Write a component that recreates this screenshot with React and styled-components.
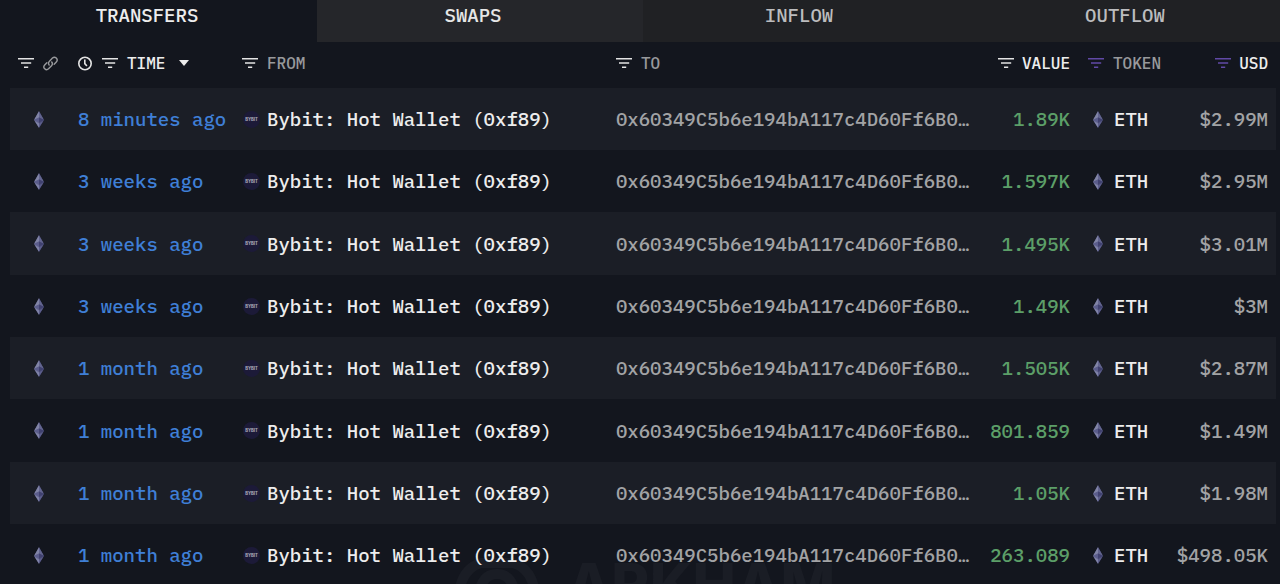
import React from "react";
import styled, { createGlobalStyle, css } from "styled-components";

const GlobalStyle = createGlobalStyle`
  *, *::before, *::after { box-sizing: border-box; }
  body {
    margin: 0;
    background: #13161e;
    font-family: "IBM Plex Mono", "Liberation Mono", monospace;
    font-weight: 500;
    -webkit-font-smoothing: antialiased;
  }
`;

const Panel = styled.main`
  position: relative;
  isolation: isolate;
  height: 100vh;
  overflow: hidden;
  background: #13161e;
  color: #ededed;
`;

const Tabs = styled.nav`
  display: flex;
  margin: 0 -15px 0 -9px;
`;

const Tab = styled.button`
  flex: 1;
  padding: 0 14px 12px 0;
  border: 0;
  background: #202124;
  color: #bcbcbe;
  font: inherit;
  font-size: 19px;
  line-height: 30px;
  cursor: pointer;
  ${(p) => p.$state === "active" && css`background: #13161e; color: #ededed;`}
  ${(p) => p.$state === "hover" && css`background: #25262a; color: #e6e6e6;`}
`;

const TableArea = styled.div`
  padding: 0 4px 0 10px;
`;

const Table = styled.table`
  width: 100%;
  table-layout: fixed;
  border-collapse: collapse;
`;

const Col = styled.col`
  width: ${(p) => p.$width};
`;

const HeadCell = styled.th`
  height: 46px;
  padding: 0 ${(p) => p.$right || 0}px 4px ${(p) => p.$left || 0}px;
  font-weight: inherit;
  font-size: 16px;
  line-height: 20px;
  color: ${(p) => (p.$bright ? "#ededed" : "#98999c")};
`;

const HeadGroup = styled.div`
  display: flex;
  align-items: center;
  justify-content: ${(p) => (p.$end ? "flex-end" : "flex-start")};
  gap: ${(p) => (p.$end ? 8 : 9)}px;
`;

const IconButton = styled.button`
  display: flex;
  padding: 0;
  border: 0;
  background: none;
  color: ${(p) => p.$color || "#e4e4e4"};
  cursor: pointer;
`;

const SortButton = styled.button`
  display: flex;
  align-items: center;
  gap: 14px;
  padding: 0;
  border: 0;
  background: none;
  color: inherit;
  font: inherit;
  cursor: pointer;
`;

const Row = styled.tr`
  height: 62px;
  &:nth-child(odd) { background: #1b1e26; }
  &:nth-child(3n) { height: 63px; }
`;

const Cell = styled.td`
  padding: 0 ${(p) => p.$right || 0}px 0 ${(p) => p.$left || 0}px;
  font-size: 19px;
  line-height: 24px;
  white-space: nowrap;
  text-align: ${(p) => p.$align || "left"};
  color: ${(p) => p.$color || "#ededed"};
`;

const CellLink = styled.a`
  color: inherit;
  text-decoration: none;
`;

const Entity = styled.span`
  display: flex;
  align-items: center;
  gap: ${(p) => p.$gap}px;
`;

const ChainMark = styled.span`
  display: flex;
  justify-content: center;
  padding-right: 10px;
`;

const Watermark = styled.div`
  position: absolute;
  z-index: -1;
  left: 0;
  right: 0;
  bottom: -38px;
  display: flex;
  align-items: center;
  justify-content: center;
  gap: 26px;
  padding-left: 8px;
  color: #1a1d25;
  font: 800 58px/76px Inter, sans-serif;
`;

const FilterIcon = () => (
  <svg width="16" height="12" viewBox="0 0 16 12" fill="none" stroke="currentColor" strokeWidth="1.6" aria-hidden="true">
    <path d="M0 1.8H16M3 6H13.2M6 10.2H10.2" />
  </svg>
);

const LinkIcon = () => (
  <svg width="15" height="15" viewBox="0 0 16 16" fill="none" stroke="#98999c" strokeWidth="1.5" strokeLinecap="round" aria-hidden="true">
    <path d="M6.6 9.6A3 3 0 0 1 6.9 5.6L10.1 2.2A2.9 2.9 0 0 1 14.2 6.3L11.9 8.7" />
    <path d="M9.3 6.4A3 3 0 0 1 9.1 10.3L5.9 13.7A2.9 2.9 0 0 1 1.8 9.6L4.1 7.2" />
  </svg>
);

const ClockIcon = () => (
  <svg width="15" height="15" viewBox="0 0 15 15" fill="none" stroke="currentColor" strokeWidth="1.6" aria-hidden="true">
    <circle cx="7" cy="7.5" r="6.2" />
    <path d="M6.8 3.6V7.6L8.9 10" />
  </svg>
);

const Caret = () => (
  <svg width="10" height="6" viewBox="0 0 10 6" fill="currentColor" aria-hidden="true">
    <path d="M0 0H10L5 6Z" />
  </svg>
);

const EthIcon = () => (
  <svg width="10" height="17" viewBox="0 0 10 17" aria-hidden="true">
    <path d="M5 0L0 9L5 17Z" fill="#65678f" />
    <path d="M5 0L10 9L5 17Z" fill="#4b4d78" />
    <path d="M5 0.5L0.3 8.6L5 6.4Z" fill="#8184a6" />
    <path d="M5 0.5L9.7 8.6L5 6.4Z" fill="#63658f" />
    <path d="M0.3 9L5 6.4V11.6Z" fill="#5a5c8c" />
    <path d="M9.7 9L5 6.4V11.6Z" fill="#40416f" />
    <path d="M0.8 10L5 12.6V16.6Z" fill="#8083a8" />
    <path d="M9.2 10L5 12.6V16.6Z" fill="#5d5f8c" />
  </svg>
);

const BybitIcon = () => (
  <svg width="19" height="19" viewBox="0 0 19 19" aria-hidden="true">
    <circle cx="9.5" cy="9.5" r="8.5" fill="#1c1a38" />
    <text x="9.5" y="11" textAnchor="middle" fill="#a5a5b5" fontFamily="Inter, sans-serif" fontWeight="800" fontSize="4.2">
      BYBIT
    </text>
  </svg>
);

const ArkhamIcon = () => (
  <svg width="88" height="76" viewBox="0 0 88 76" fill="none" stroke="currentColor" strokeWidth="10" aria-hidden="true">
    <path d="M6 70V46Q10 22 28 17H60Q78 22 82 46V70" />
    <path d="M25 72V52Q28 28 44 28Q60 28 63 52V72" />
  </svg>
);

const Filter = ({ name, color }) => (
  <IconButton type="button" aria-label={`Filter by ${name}`} $color={color}>
    <FilterIcon />
  </IconButton>
);

const PURPLE = "#6149a6";
const ADDRESS = "0x60349C5b6e194bA117c4D60Ff6B0…";
const SENDER = "Bybit: Hot Wallet (0xf89)";

const tabs = [
  { label: "TRANSFERS", state: "active" },
  { label: "SWAPS", state: "hover" },
  { label: "INFLOW" },
  { label: "OUTFLOW" },
];

const columns = ["68px", "164px", "auto", "29%", "87px", "100px", "106px"];

const transfers = [
  { time: "8 minutes ago", value: "1.89K", usd: "$2.99M" },
  { time: "3 weeks ago", value: "1.597K", usd: "$2.95M" },
  { time: "3 weeks ago", value: "1.495K", usd: "$3.01M" },
  { time: "3 weeks ago", value: "1.49K", usd: "$3M" },
  { time: "1 month ago", value: "1.505K", usd: "$2.87M" },
  { time: "1 month ago", value: "801.859", usd: "$1.49M" },
  { time: "1 month ago", value: "1.05K", usd: "$1.98M" },
  { time: "1 month ago", value: "263.089", usd: "$498.05K" },
];

export default function App() {
  return (
    <Panel>
      <GlobalStyle />
      <Tabs>
        {tabs.map((t) => (
          <Tab key={t.label} type="button" $state={t.state}>{t.label}</Tab>
        ))}
      </Tabs>
      <TableArea>
        <Table>
          <colgroup>
            {columns.map((w, i) => <Col key={i} $width={w} />)}
          </colgroup>
          <thead>
            <tr>
              <HeadCell $left={8}>
                <HeadGroup><Filter name="chain" /><LinkIcon /></HeadGroup>
              </HeadCell>
              <HeadCell $bright>
                <HeadGroup>
                  <IconButton type="button" aria-label="Toggle time format"><ClockIcon /></IconButton>
                  <Filter name="time" />
                  <SortButton type="button">TIME<Caret /></SortButton>
                </HeadGroup>
              </HeadCell>
              <HeadCell><HeadGroup><Filter name="sender" />FROM</HeadGroup></HeadCell>
              <HeadCell><HeadGroup><Filter name="receiver" />TO</HeadGroup></HeadCell>
              <HeadCell $bright>
                <HeadGroup $end><Filter name="value" /><SortButton type="button">VALUE</SortButton></HeadGroup>
              </HeadCell>
              <HeadCell $left={18}>
                <HeadGroup><Filter name="token" color={PURPLE} />TOKEN</HeadGroup>
              </HeadCell>
              <HeadCell $bright $right={8}>
                <HeadGroup $end><Filter name="USD" color={PURPLE} /><SortButton type="button">USD</SortButton></HeadGroup>
              </HeadCell>
            </tr>
          </thead>
          <tbody>
            {transfers.map((t, i) => (
              <Row key={i}>
                <Cell><ChainMark><EthIcon /></ChainMark></Cell>
                <Cell $color="#3f7fd6"><CellLink href="#tx">{t.time}</CellLink></Cell>
                <Cell>
                  <Entity $gap={6}><BybitIcon /><CellLink href="#sender">{SENDER}</CellLink></Entity>
                </Cell>
                <Cell $color="#a2a3a5"><CellLink href="#receiver">{ADDRESS}</CellLink></Cell>
                <Cell $align="right" $color="#5c9f68">{t.value}</Cell>
                <Cell $left={23}><Entity $gap={11}><EthIcon />ETH</Entity></Cell>
                <Cell $align="right" $right={8} $color="#a2a3a5">{t.usd}</Cell>
              </Row>
            ))}
          </tbody>
        </Table>
      </TableArea>
      <Watermark aria-hidden="true"><ArkhamIcon />ARKHAM</Watermark>
    </Panel>
  );
}
